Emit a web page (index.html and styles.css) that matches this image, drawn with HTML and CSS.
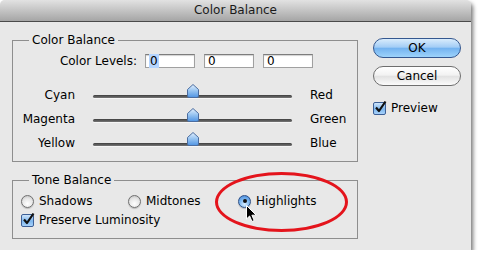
FILE: index.html
```html
<!DOCTYPE html>
<html>
<head>
<meta charset="utf-8">
<link rel="stylesheet" href="styles.css">
</head>
<body>
<div class="window">
  <div class="titlebar">Color Balance</div>
  <div class="content">
    <div class="left">
      <div class="group group-cb">
        <span class="legend">Color Balance</span>
        <div class="levels">
          <span class="levels-label">Color Levels:</span>
          <span class="field"><span class="sel">0</span></span>
          <span class="field">0</span>
          <span class="field">0</span>
        </div>
        <div class="sliders">
          <span class="sl-left">Cyan</span>
          <span class="track"><svg class="thumb" width="12" height="14" viewBox="0 0 12 14"><defs><linearGradient id="tg" x1="0" y1="0" x2="0" y2="1"><stop offset="0" stop-color="#e4f0fd"/><stop offset="0.45" stop-color="#9cc7f2"/><stop offset="1" stop-color="#4f94e3"/></linearGradient></defs><path d="M6 0.5 L11.5 5.5 V12 Q11.5 13.5 10 13.5 H2 Q0.5 13.5 0.5 12 V5.5 Z" fill="url(#tg)" stroke="#4b6da0"/></svg></span>
          <span class="sl-right">Red</span>
          <span class="sl-left">Magenta</span>
          <span class="track"><svg class="thumb" width="12" height="14" viewBox="0 0 12 14"><path d="M6 0.5 L11.5 5.5 V12 Q11.5 13.5 10 13.5 H2 Q0.5 13.5 0.5 12 V5.5 Z" fill="url(#tg)" stroke="#4b6da0"/></svg></span>
          <span class="sl-right">Green</span>
          <span class="sl-left">Yellow</span>
          <span class="track"><svg class="thumb" width="12" height="14" viewBox="0 0 12 14"><path d="M6 0.5 L11.5 5.5 V12 Q11.5 13.5 10 13.5 H2 Q0.5 13.5 0.5 12 V5.5 Z" fill="url(#tg)" stroke="#4b6da0"/></svg></span>
          <span class="sl-right">Blue</span>
        </div>
      </div>
      <div class="group group-tb">
        <span class="legend">Tone Balance</span>
        <div class="radios">
          <span class="opt"><span class="radio"></span>Shadows</span>
          <span class="opt"><span class="radio"></span>Midtones</span>
          <span class="opt"><span class="radio on"></span>Highlights</span>
        </div>
        <div class="check-row">
          <span class="check"><svg width="15" height="15" viewBox="0 0 15 15"><path d="M3 7.5 L6 11 L12.5 1.5" fill="none" stroke="#111" stroke-width="2.2" stroke-linejoin="round"/></svg></span>Preserve Luminosity
        </div>
      </div>
    </div>
    <div class="right">
      <div class="btn btn-ok">OK</div>
      <div class="btn btn-cancel">Cancel</div>
      <div class="check-row preview">
        <span class="check"><svg width="15" height="15" viewBox="0 0 15 15"><path d="M3 7.5 L6 11 L12.5 1.5" fill="none" stroke="#111" stroke-width="2.2" stroke-linejoin="round"/></svg></span>Preview
      </div>
    </div>
  </div>
  <div class="ring"></div>
  <svg class="cursor" width="12" height="18" viewBox="0 0 12 18"><path d="M0.5 0.5 V14 L3.6 11 L6 16.5 L8.2 15.5 L5.9 10.2 H10.2 Z" fill="#000" stroke="#fff" stroke-width="1"/></svg>
</div>
</body>
</html>
```
FILE: styles.css
```css
html, body {
  margin: 0;
  background: #ffffff;
}
body {
  font-family: "DejaVu Sans", "Liberation Sans", sans-serif;
  font-size: 12px;
  color: #000;
}
.window {
  position: relative;
  width: 471px;
  height: 250px;
  background: #e8e8e8;
  border-radius: 5px 5px 0 0;
  box-shadow: 2px 3px 4px rgba(0, 0, 0, 0.55);
  display: flex;
  flex-direction: column;
}
.titlebar {
  height: 21px;
  line-height: 21px;
  border-bottom: 1px solid #4a4a4a;
  border-radius: 5px 5px 0 0;
  background: linear-gradient(#e2e2e2, #a5a5a5);
  text-align: center;
  color: #1a1a1a;
}
.content {
  display: flex;
  padding-left: 12px;
}
.left {
  width: 346px;
  display: flex;
  flex-direction: column;
}
.group {
  position: relative;
  box-sizing: border-box;
  border: 1px solid #8e8e8e;
  margin-top: 18px;
}
.group-cb {
  height: 122px;
}
.group-tb {
  height: 59px;
}
.legend {
  position: absolute;
  top: -8px;
  left: 16px;
  padding: 0 3px;
  background: #e8e8e8;
  line-height: 14px;
}
.levels {
  display: flex;
  align-items: center;
  margin-top: 13px;
  height: 14px;
}
.levels-label {
  width: 124px;
  text-align: right;
  margin-right: 8px;
}
.field {
  box-sizing: border-box;
  width: 50px;
  height: 14px;
  margin-right: 9px;
  background: #fff;
  border: 1px solid #a0a0a0;
  border-top-color: #7d7d7d;
  box-shadow: inset 0 1px 1px rgba(0, 0, 0, 0.18);
  padding-left: 3px;
  line-height: 12px;
}
.sel {
  background: #b5d5ff;
  padding: 0 1px;
}
.sliders {
  display: grid;
  grid-template-columns: 62px 199px auto;
  grid-auto-rows: 24px;
  column-gap: 18px;
  margin-top: 15px;
  align-items: center;
}
.sl-left {
  text-align: right;
}
.track {
  position: relative;
  height: 3px;
  margin-top: 2px;
  border-radius: 2px;
  background: linear-gradient(#3e3e3e, #777);
  box-shadow: 0 1px 0 rgba(255, 255, 255, 0.6);
}
.thumb {
  position: absolute;
  left: 94px;
  top: -11px;
}
.radios {
  display: grid;
  grid-template-columns: 107px 110px auto;
  margin-top: 13px;
  padding-left: 8px;
  height: 14px;
  align-items: center;
}
.opt {
  display: flex;
  align-items: center;
  gap: 5px;
}
.radio {
  box-sizing: border-box;
  width: 13px;
  height: 13px;
  border-radius: 50%;
  border: 1px solid #707070;
  background: radial-gradient(circle at 50% 70%, #ffffff 0%, #e6e6e6 55%, #b8b8b8 100%);
  box-shadow: 0 1px 1px rgba(0, 0, 0, 0.2);
}
.radio.on {
  position: relative;
  border-color: #2d4f86;
  background: radial-gradient(circle at 50% 75%, #d6ecff 0%, #7db7f0 50%, #3a7fd6 100%);
}
.radio.on::after {
  content: "";
  position: absolute;
  left: 3.5px;
  top: 3.5px;
  width: 4px;
  height: 4px;
  border-radius: 50%;
  background: #111;
}
.check-row {
  display: flex;
  align-items: center;
  gap: 5px;
  height: 14px;
  margin-top: 5px;
  padding-left: 8px;
}
.check {
  position: relative;
  box-sizing: border-box;
  width: 13px;
  height: 13px;
  border: 1px solid #3c5f96;
  border-radius: 2px;
  background: linear-gradient(#cfe5fb, #7db6ee 55%, #a8d2fa);
}
.check svg {
  position: absolute;
  left: -1px;
  top: -3px;
}
.right {
  width: 88px;
  margin-left: 15px;
  padding-top: 16px;
  display: flex;
  flex-direction: column;
}
.btn {
  box-sizing: border-box;
  height: 20px;
  line-height: 18px;
  text-align: center;
  border-radius: 10px;
}
.btn-ok {
  border: 1px solid #34578f;
  background: linear-gradient(#d9ecfc 0%, #a3cdf6 45%, #74b3f0 52%, #9dd3fb 100%);
}
.btn-cancel {
  margin-top: 8px;
  border: 1px solid #6e6e6e;
  background: linear-gradient(#ffffff 0%, #f2f2f2 45%, #e2e2e2 52%, #fbfbfb 100%);
}
.preview {
  margin-top: 15px;
  padding-left: 0;
}
.ring {
  position: absolute;
  left: 215px;
  top: 172px;
  width: 127px;
  height: 54px;
  border: 3px solid #e4141c;
  border-radius: 50%;
}
.cursor {
  position: absolute;
  left: 246px;
  top: 205px;
}
```
